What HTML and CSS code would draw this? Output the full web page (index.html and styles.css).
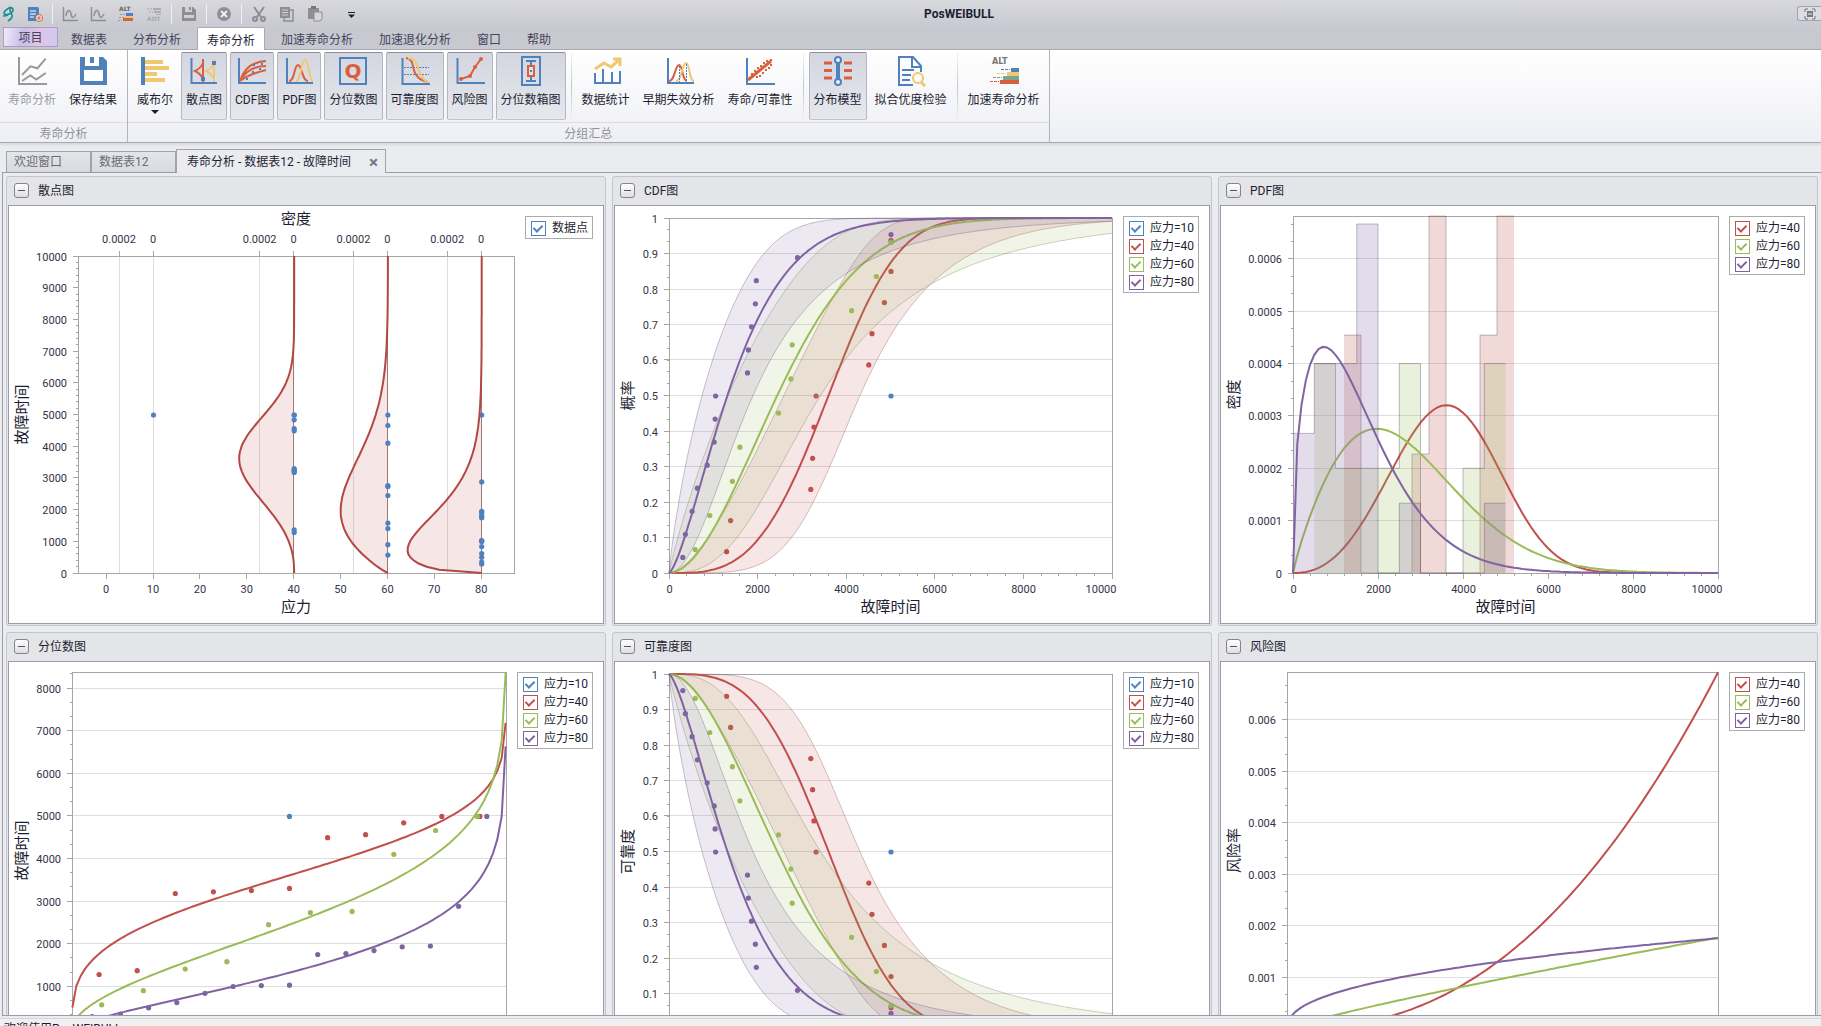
FILE: index.html
```html
<!DOCTYPE html>
<html lang="zh-CN">
<head>
  <meta charset="UTF-8">
  <meta name="viewport" content="width=device-width, initial-scale=1.0">
  <title>PosWEIBULL</title>
  <link rel="stylesheet" href="styles.css">
</head>
<body>
  <div class="app">
    <header class="titlebar">
      <div class="quick">
        <svg class="logo" width="17" height="18" viewBox="0 0 17 18"><path d="M11 2C7 4 4 6 4 8s3 2 5 1 5-3 4-5-3-1-3 1 1 3 2 5-1 4-4 6M3 11c2 0 3 0 5-1" fill="none" stroke="#14908f" stroke-width="1.600"/></svg>
        <button aria-label="数据"><svg viewBox="0 0 16 16"><path d="M1 1h10l1 2v12H1z" fill="#4f81bd"/><path d="M3 5h6M3 8h6M3 11h4" stroke="#fff"/><circle cx="12" cy="12" r="3.500" fill="#e8e8ec" stroke="#d9603f"/><path d="M10 12h4M12 10v4" stroke="#d9603f"/></svg></button>
        <span class="sep"></span>
        <button disabled aria-label="曲线"><svg viewBox="0 0 16 16"><path d="M1.500 1v13.500H16M4 10c1-7 4-7 5-2s3 4 5 0" class="g thin"/></svg></button>
        <button disabled aria-label="曲线"><svg viewBox="0 0 16 16"><path d="M1.500 1v13.500H16M4 10c1-7 4-7 5-2s3 4 5 0" class="g thin"/></svg></button>
        <button aria-label="加速寿命"><svg viewBox="0 0 16 16"><text x="1" y="5" class="mini">ALT</text><path d="M8 7h7v3H8z" fill="#4f81bd"/><path d="M7 10h8v2H7z" fill="#efc86f"/><path d="M5 12h10v3H5z" fill="#d9603f"/><path d="M2 8.500h5M1 11.500h5M0 14.500h4" stroke="#999" stroke-dasharray="2 1"/></svg></button>
        <button disabled aria-label="加速退化"><svg viewBox="0 0 16 16"><path d="M7 2h8v2H7zM8 5h7v2H8zM10 8h5v1h-5z" fill="#aaa"/><path d="M1 3h5M3 6h4" stroke="#aaa" stroke-dasharray="2 1"/><text x="1" y="15" class="mini dim">ADT</text></svg></button>
        <span class="sep"></span>
        <button disabled aria-label="保存"><svg viewBox="0 0 16 16"><path d="M1 1h11l3 3v11H1z" fill="#8f8f92"/><path d="M4 1h7v5H4zM3 9h10v3H3z" fill="#d0d0d5"/><path d="M8 1h2v3H8z" fill="#8f8f92"/></svg></button>
        <span class="sep"></span>
        <button disabled aria-label="关闭"><svg viewBox="0 0 16 16"><circle cx="8" cy="8" r="7" fill="#8f8f92"/><path d="M5 5l6 6M11 5l-6 6" stroke="#eee" stroke-width="2"/></svg></button>
        <span class="sep"></span>
        <button disabled aria-label="剪切"><svg viewBox="0 0 16 16"><path d="M3 1l7 10M13 1L6 11" class="g"/><circle cx="4" cy="13" r="2" class="g"/><circle cx="12" cy="13" r="2" class="g"/></svg></button>
        <button disabled aria-label="复制"><svg viewBox="0 0 16 16"><path d="M5 4h9v11H5z" class="g thin"/><path d="M1 1h10v11H1z" fill="#8f8f92"/><path d="M3 4h6M3 6.500h6M3 9h6" stroke="#d0d0d5"/></svg></button>
        <button disabled aria-label="粘贴"><svg viewBox="0 0 16 16"><path d="M1 2h11v11H1z" fill="#8f8f92"/><path d="M4 0h5v3H4z" fill="#777"/><path d="M7 6h8v7l-2 2H7z" fill="#d5d5da" stroke="#8f8f92"/></svg></button>
        <button class="more" aria-label="自定义"><svg viewBox="0 0 16 16"><path d="M5 6.500h7" stroke="#222"/><path d="M5 8.500h7L8.500 12z" fill="#222"/></svg></button>
      </div>
      <h1>PosWEIBULL</h1>
      <button class="win" aria-label="窗口"><svg width="12" height="12" viewBox="0 0 12 12"><path d="M1 4V1h3M8 1h3v3M11 8v3H8M4 11H1V8" fill="none" stroke="#777787"/><path d="M3 3h6v6H3z" fill="#777787"/><path d="M4 6h4" stroke="#eee"/></svg></button>
    </header>

    <nav class="tabs">
      <button class="file">项目</button>
      <button>数据表</button>
      <button>分布分析</button>
      <button class="on">寿命分析</button>
      <button>加速寿命分析</button>
      <button>加速退化分析</button>
      <button>窗口</button>
      <button>帮助</button>
    </nav>

    <section class="ribbon">
      <div class="group">
        <div class="items">
          <button class="tool" disabled><svg viewBox="0 0 32 32"><path d="M3 2v27h28" class="ax gray"/><path d="M6 20l8.400-8.700 7 2L29.700 3.700M6 26l8.300-5.500 6 4 9.400-6.500" fill="none" stroke="#999" stroke-width="2"/></svg>寿命分析</button>
          <button class="tool"><svg viewBox="0 0 32 32"><path d="M3 2h23l4 4v24H3z" fill="#4f81bd"/><path d="M8 2h14v9H8zM7 15h19v11H7z" fill="#fff"/><path d="M13 2h4v6h-4z" fill="#4f81bd"/></svg>保存结果</button>
        </div>
        <div class="caption">寿命分析</div>
      </div>
      <div class="group wide">
        <div class="items">
          <button class="tool"><svg viewBox="0 0 32 32"><path d="M2 2h4v28H2z" fill="#4f81bd"/><path d="M6 5h18v4H6zM6 11h24v4H6zM6 17h12v4H6zM6 23h20v4H6z" fill="#efc86f"/></svg>威布尔<i class="arrow"></i></button>
          <button class="tool down"><svg viewBox="0 0 32 32"><path d="M3.500 3v25H29" class="ax"/><path d="M15 4v23M15 8Q13 13 7 16q6 3 8 8" class="r"/><path d="M26 4v23M26 8Q24 13 18 16q6 3 8 8" class="y"/><path d="M13 22h4v4h-4zM24 6h4v4h-4z" fill="#4f81bd"/></svg>散点图</button>
          <button class="tool down"><svg viewBox="0 0 32 32"><path d="M3 3v25h27" class="ax"/><path d="M4 26Q10 7 30 6M4 26Q12 11 30 11M4 26Q13 19 30 15" class="r"/><path d="M17 9h2v2h-2zM16 16h2v2h-2zM23 13h2v2h-2zM10 23h2v2h-2zM25 8h2v2h-2z" fill="#4f81bd"/></svg>CDF图</button>
          <button class="tool down"><svg viewBox="0 0 32 32"><path d="M4 3v25h26" class="ax"/><path d="M6 26c6 0 5-16 9-16s4 16 10 16" class="r"/><path d="M13 26c5 0 5-21 9-21s4 21 8 21" class="y"/></svg>PDF图</button>
          <button class="tool down"><svg viewBox="0 0 32 32"><path d="M3 3h26v26H3z" fill="none" stroke="#4f81bd" stroke-width="2"/><text x="16" y="23" class="q">Q</text></svg>分位数图</button>
          <button class="tool down"><svg viewBox="0 0 32 32"><path d="M3.500 3v26H31" class="ax"/><path d="M5 12.500h25M5 19.500h25" stroke="#4f81bd" stroke-dasharray="2 1"/><path d="M7 3c8 1 6 9 9 15s7 8 13 9" class="r"/><path d="M9 3c9 0 9 9 12 15s5 9 9 9" class="y"/></svg>可靠度图</button>
          <button class="tool down"><svg viewBox="0 0 32 32"><path d="M3.500 3v25H31" class="ax"/><path d="M7 24l9-3 5-9 6-8" class="r"/><circle cx="7" cy="24" r="2" class="dot"/><circle cx="16" cy="21" r="2" class="dot"/><circle cx="21" cy="12" r="2" class="dot"/><circle cx="27" cy="4" r="2" class="dot"/></svg>风险图</button>
          <button class="tool down"><svg viewBox="0 0 32 32"><path d="M7 2h18v28H7z" fill="none" stroke="#4f81bd" stroke-width="2"/><path d="M16 6v20M11 6h10M11 26h10" class="ax"/><path d="M13 11h6v10h-6z" fill="#dfe2ea" stroke="#d9603f" stroke-width="2"/><path d="M15 15h2v2h-2z" fill="#4f81bd"/></svg>分位数箱图</button>
          <span class="bar"></span>
          <button class="tool"><svg viewBox="0 0 32 32"><path d="M5 18v10h25V16M13 14v14M22 17v11" class="ax"/><path d="M5 14l9-6 7 4 8-7M23 4h7v7" class="y thick"/></svg>数据统计</button>
          <button class="tool"><svg viewBox="0 0 32 32"><path d="M5 3v25h26" class="ax"/><path d="M6 26c6 0 6-16 10-16s3 16 8 16" class="r"/><path d="M13 26c6 0 6-18 10-18s3 18 8 18" class="y"/><path d="M16.500 11v16M23.500 9v18" stroke="#4f81bd" stroke-dasharray="2 1"/></svg>早期失效分析</button>
          <button class="tool"><svg viewBox="0 0 32 32"><path d="M3 3v26h28" class="ax"/><path d="M4 25L27 6" class="r thick"/><path d="M7 18h2v2H7zM10 15h2v2h-2zM13 12h2v2h-2zM16 10h2v2h-2zM19 7h2v2h-2zM22 5h2v2h-2zM26 4h2v2h-2zM12 21h2v2h-2zM15 20h2v2h-2zM18 17h2v2h-2zM21 14h2v2h-2zM24 12h2v2h-2zM26 9h2v2h-2zM15 14h2v2h-2zM20 10h2v2h-2z" fill="#d9603f"/></svg>寿命/可靠性</button>
          <span class="bar"></span>
          <button class="tool down"><svg viewBox="0 0 32 32"><path d="M2 8h8M2 15.500h8M2 23h8M22 8h8M22 15.500h8M22 23h8" stroke="#d9603f" stroke-width="3"/><path d="M16 6v20" stroke="#4f81bd" stroke-width="4"/><circle cx="16" cy="5" r="3" fill="#eef0f5" stroke="#4f81bd" stroke-width="2"/><circle cx="16" cy="27" r="3" fill="#eef0f5" stroke="#4f81bd" stroke-width="2"/></svg>分布模型</button>
          <button class="tool"><svg viewBox="0 0 32 32"><path d="M18 30H4V2h14l8 9v6M17 3v9h8" class="ax"/><path d="M7 15h12M7 20h9M7 25h8" stroke="#4f81bd" stroke-width="2"/><circle cx="23" cy="23" r="5" class="y"/><path d="M26 27l4 4" class="y thick"/></svg>拟合优度检验</button>
          <span class="bar"></span>
          <button class="tool"><svg viewBox="0 0 32 32"><text x="4" y="9" class="alt">ALT</text><path d="M23 13h8v4h-8z" fill="#4f81bd"/><path d="M19 17h12v4H19z" fill="#efc86f"/><path d="M15 21h16v4H15z" fill="#74a892"/><path d="M12 25h19v4H12z" fill="#d9603f"/><g stroke-dasharray="3 1"><path d="M13 14.500h9" stroke="#4f81bd"/><path d="M9 18.500h9" stroke="#efc86f"/><path d="M5 22.500h9" stroke="#74a892"/><path d="M2 26.500h9" stroke="#d9603f"/></g></svg>加速寿命分析</button>
        </div>
        <div class="caption">分组汇总</div>
      </div>
    </section>

    <nav class="docs">
      <button>欢迎窗口</button>
      <button>数据表12</button>
      <button class="on">寿命分析 - 数据表12 - 故障时间<b>×</b></button>
    </nav>

    <main class="work">
      <article class="panel">
        <h2><button class="fold" aria-label="折叠"></button>散点图</h2>
        <div class="chart">
          <svg class="plot" data-chart="scatter"></svg>
          <div class="legend">
            <label class="blue"><input type="checkbox" checked>数据点</label>
          </div>
        </div>
      </article>
      <article class="panel">
        <h2><button class="fold" aria-label="折叠"></button>CDF图</h2>
        <div class="chart">
          <svg class="plot" data-chart="cdf"></svg>
          <div class="legend">
            <label class="blue"><input type="checkbox" checked>应力=10</label>
            <label class="red"><input type="checkbox" checked>应力=40</label>
            <label class="green"><input type="checkbox" checked>应力=60</label>
            <label class="purple"><input type="checkbox" checked>应力=80</label>
          </div>
        </div>
      </article>
      <article class="panel">
        <h2><button class="fold" aria-label="折叠"></button>PDF图</h2>
        <div class="chart">
          <svg class="plot" data-chart="pdf"></svg>
          <div class="legend">
            <label class="red"><input type="checkbox" checked>应力=40</label>
            <label class="green"><input type="checkbox" checked>应力=60</label>
            <label class="purple"><input type="checkbox" checked>应力=80</label>
          </div>
        </div>
      </article>
      <article class="panel">
        <h2><button class="fold" aria-label="折叠"></button>分位数图</h2>
        <div class="chart">
          <svg class="plot" data-chart="quantile"></svg>
          <div class="legend">
            <label class="blue"><input type="checkbox" checked>应力=10</label>
            <label class="red"><input type="checkbox" checked>应力=40</label>
            <label class="green"><input type="checkbox" checked>应力=60</label>
            <label class="purple"><input type="checkbox" checked>应力=80</label>
          </div>
        </div>
      </article>
      <article class="panel">
        <h2><button class="fold" aria-label="折叠"></button>可靠度图</h2>
        <div class="chart">
          <svg class="plot" data-chart="reliability"></svg>
          <div class="legend">
            <label class="blue"><input type="checkbox" checked>应力=10</label>
            <label class="red"><input type="checkbox" checked>应力=40</label>
            <label class="green"><input type="checkbox" checked>应力=60</label>
            <label class="purple"><input type="checkbox" checked>应力=80</label>
          </div>
        </div>
      </article>
      <article class="panel">
        <h2><button class="fold" aria-label="折叠"></button>风险图</h2>
        <div class="chart">
          <svg class="plot" data-chart="hazard"></svg>
          <div class="legend">
            <label class="red"><input type="checkbox" checked>应力=40</label>
            <label class="green"><input type="checkbox" checked>应力=60</label>
            <label class="purple"><input type="checkbox" checked>应力=80</label>
          </div>
        </div>
      </article>
    </main>

    <footer class="status">欢迎使用PosWEIBULL</footer>
  </div>

  <script src="charts.js"></script>
</body>
</html>
```

FILE: styles.css
```css
* {
  box-sizing: border-box;
}

html,
body {
  margin: 0;
  height: 100%;
  overflow: hidden;
}

body {
  font-family: Roboto, "Noto Sans CJK SC", sans-serif;
  font-size: 12px;
  line-height: 16px;
  color: #1e1e32;
  background: #ebecf0;
}

button {
  font: inherit;
  color: inherit;
  background: none;
  border: 0;
  padding: 0;
}

/* the status bar runs a little past the bottom of the window */
.app {
  display: flex;
  flex-direction: column;
  height: calc(100vh + 16px);
}

/* title bar */
.titlebar {
  display: flex;
  align-items: center;
  height: 27px;
  flex: none;
  background: linear-gradient(#d8d9dd, #c9c9d2);
}

.quick {
  display: flex;
  align-items: center;
}

.quick .logo {
  margin-right: 4px;
}

.quick button {
  width: 28px;
  height: 18px;
}

.quick button svg {
  display: block;
  width: 16px;
  height: 16px;
  margin: 0 auto;
}

.quick .more {
  margin-left: 8px;
}

.quick .sep {
  width: 1px;
  height: 20px;
  margin: 0 3px;
  background: #f1f1f4;
}

.g {
  fill: none;
  stroke: #8f8f92;
  stroke-width: 2;
}

.g.thin {
  stroke-width: 1.5;
}

.mini {
  font: bold 6px "DejaVu Sans", sans-serif;
  fill: #666;
}

.mini.dim {
  fill: #aaa;
}

.titlebar h1 {
  flex: 1;
  margin: 0;
  padding-right: 244px;
  font-size: 12px;
  font-weight: 700;
  text-align: center;
}

.win {
  width: 24px;
  height: 15px;
  border: 1px solid #a3a3b0;
  border-right: 0;
  border-radius: 3px 0 0 3px;
  background: #dcdce2;
}

.win svg {
  display: block;
  margin: 0 auto;
}

/* ribbon tabs */
.tabs {
  display: flex;
  gap: 6px;
  height: 23px;
  flex: none;
  padding-left: 3px;
  background: #c8c8d1;
  border-bottom: 1px solid #a9a9b1;
  color: #44445a;
}

.tabs button {
  padding: 4px 10px 0;
  height: 22px;
}

.tabs .file {
  width: 55px;
  height: 20px;
  margin-right: -3px;
  padding: 2px 0 0;
  border: 1px solid #a7a2bb;
  background: linear-gradient(100deg, #f3e9fa, #c9bfe8 35%, #e3c3e8 65%, #cfc9f2);
}

.tabs .on {
  height: 23px;
  margin-bottom: -1px;
  background: #fff;
  border: 1px solid #a9a9b1;
  border-bottom: 0;
  border-radius: 2px 2px 0 0;
  padding: 3px 9px 0;
  color: #1e1e32;
}

/* ribbon */
.ribbon {
  display: flex;
  height: 93px;
  flex: none;
  background: linear-gradient(#fff, #eeeff4);
  border-bottom: 1px solid #a9a9b1;
  box-shadow: 0 2px 2px #d9dadf;
}

.group {
  display: flex;
  flex-direction: column;
  border-right: 1px solid #b4b4bd;
}

.items {
  display: flex;
  gap: 3px;
  height: 74px;
  padding: 2px 5px 2px 3px;
}

.wide .items {
  padding: 2px 4px;
}

.caption {
  flex: 1;
  text-align: center;
  color: #92929e;
  border-top: 1px solid #dcdce2;
  padding-top: 3px;
}

.tool {
  display: flex;
  flex-direction: column;
  align-items: center;
  padding: 2px 4px 0;
  border: 1px solid transparent;
  white-space: nowrap;
  border-radius: 2px;
}

.tool svg {
  width: 32px;
  height: 32px;
  margin-bottom: 5px;
}

.tool:disabled {
  color: #9a9aa6;
}

.tool.down {
  background: linear-gradient(#d3d6df, #e6e8ee);
  border-color: #8d8d9b #b6b6c1 #c3c3cc;
}

.arrow {
  border: 4px solid transparent;
  border-top-color: #1e1e32;
  border-bottom: 0;
  margin-top: 2px;
}

.bar {
  width: 1px;
  margin: 0 2px;
  background: linear-gradient(#f4f4f7, #c6c6cf, #f0f0f4);
}

.ax {
  fill: none;
  stroke: #4f81bd;
  stroke-width: 2;
}

.ax.gray {
  stroke: #999;
}

.r {
  fill: none;
  stroke: #d9603f;
  stroke-width: 2;
}

.y {
  fill: none;
  stroke: #efc86f;
  stroke-width: 2;
}

.thick {
  stroke-width: 3;
}

.dot {
  fill: #d9603f;
}

.q {
  font: bold 20px "DejaVu Sans", sans-serif;
  fill: #d9603f;
  text-anchor: middle;
}

.alt {
  font: bold 8px "DejaVu Sans", sans-serif;
  fill: #777;
}

/* document tabs */
.docs {
  display: flex;
  align-items: flex-end;
  height: 29px;
  flex: none;
  padding-left: 6px;
  color: #6b6b7a;
}

.docs button {
  height: 21px;
  min-width: 85px;
  padding: 0 7px;
  text-align: left;
  border: 1px solid #a3a3b0;
  border-bottom: 0;
  background: linear-gradient(#e4e5e9, #d9dadf);
}

.docs .on {
  height: 24px;
  margin-bottom: -1px;
  position: relative;
  padding: 0 7px 0 10px;
  background: #ebecf0;
  color: #1e1e32;
}

.docs b {
  margin-left: 18px;
  font-size: 17px;
  line-height: 12px;
  vertical-align: -2px;
  color: #777787;
}

/* chart panels */
.work {
  flex: 1;
  min-height: 0;
  overflow: hidden;
  display: grid;
  grid-template-columns: repeat(3, minmax(0, 1fr));
  align-content: start;
  gap: 6px;
  margin-left: 2px;
  padding: 3px;
  border: 1px solid #9c9ca9;
  border-right: 0;
}

.panel {
  border: 1px solid #c3c4cc;
  border-radius: 3px;
  padding: 0 1px 1px;
  background: #e4e5e9;
}

.panel h2 {
  display: flex;
  align-items: center;
  gap: 9px;
  height: 28px;
  margin: 0;
  padding: 0 0 1px 6px;
  font-size: 12px;
  font-weight: 400;
}

.fold {
  width: 15px;
  height: 15px;
  border: 1px solid #83838a;
  border-radius: 3px;
  background: linear-gradient(#fff, #dedee2);
}

.fold::before {
  content: "";
  display: block;
  width: 7px;
  height: 1px;
  margin: 0 auto;
  background: #55555f;
}

.chart {
  display: flex;
  align-items: flex-start;
  background: #fff;
  border: 1px solid #9c9ca9;
  padding-right: 10px;
}

.plot {
  flex: 1;
  min-width: 0;
  height: 417px;
  overflow: visible;
}

.legend {
  display: flex;
  flex-direction: column;
  margin-top: 10px;
  padding: 2px 4px 1px 5px;
  border: 1px solid #ababab;
}

.legend label {
  display: flex;
  align-items: center;
  gap: 6px;
  height: 18px;
}

.legend input {
  appearance: none;
  display: grid;
  place-items: center;
  width: 15px;
  height: 15px;
  margin: 0;
  border: 1px solid currentColor;
  color: var(--c);
}

.legend input:checked::after {
  content: "";
  width: 4px;
  height: 7px;
  margin-bottom: 2px;
  border: solid currentColor;
  border-width: 0 2px 2px 0;
  transform: rotate(45deg);
}

.blue { --c: #4f81bd; }
.red { --c: #c0504d; }
.green { --c: #9bbb59; }
.purple { --c: #8064a2; }

.frame {
  fill: none;
  stroke: #a6a6a6;
}

.grid {
  stroke: #dedede;
}

.tick {
  fill: #333348;
  font-size: 11px;
}

.axis-title {
  fill: #1e1e32;
  font-size: 15px;
  text-anchor: middle;
}

.curve {
  fill: none;
  stroke-width: 2;
}

.status {
  flex: none;
  height: 24px;
  margin-top: 2px;
  padding: 2px 4px 0;
  border-top: 1px solid #d5d6da;
  background: #f0f0f0;
}
```

FILE: charts.js
```js
const BLUE = "#4f81bd";
const HEIGHT_BOTTOM = 367;

// Weibull fit for each stress level, c is the spread of the confidence band
const groups = [
  { color: "#c0504d", edge: "#8a5050", stress: 40, k: 3.33, eta: 4020, c: 0.74, bin: 400,
    times: [1290, 1380, 3190, 3230, 3260, 3310, 4500, 4570, 4850, 5000, 5000] },
  { color: "#9bbb59", edge: "#6f7f50", stress: 60, k: 1.86, eta: 2976, c: 0.64, bin: 500,
    times: [580, 910, 1420, 1590, 2460, 2740, 2770, 4110, 4670, 5000] },
  { color: "#8064a2", edge: "#60507a", stress: 80, k: 1.423, eta: 1706, c: 0.61, bin: 500,
    times: [300, 360, 510, 630, 850, 1010, 1030, 1040, 1760, 1780, 1850, 1940, 1960, 2890, 5000] }
];

const cdf = (g, t) => 1 - Math.exp(-Math.pow(t / g.eta, g.k));
const pdf = (g, t) => g.k / g.eta * Math.pow(t / g.eta, g.k - 1) * Math.exp(-Math.pow(t / g.eta, g.k));
const hazard = (g, t) => g.k / g.eta * Math.pow(t / g.eta, g.k - 1);
const quantile = (g, p) => g.eta * Math.pow(-Math.log(1 - p), 1 / g.k);
const rank = (i, n) => (i + 0.7) / (n + 0.4);

function bound(g, t, sign) {
  if (t <= 0) return 0;
  const u = g.k * Math.log(t / g.eta);
  const sd = Math.sqrt((1.1087 - 0.514 * u + g.c * u * u) / g.times.length);
  return 1 - Math.exp(-Math.exp(u + sign * 1.96 * sd));
}

function range(from, to, step) {
  const out = [];
  const n = Math.floor((to - from) / step + 0.001);
  for (let i = 0; i <= n; i++) out.push(from + i * step);
  return out;
}

const path = pts => "M" + pts.map(p => p[0].toFixed(1) + " " + p[1].toFixed(1)).join("L");
const snap = v => Math.floor(v) + 0.5;

// Draws frame, grid, ticks and titles; returns the scales
function axes(svg, o) {
  const right = svg.clientWidth - 11;
  const x = v => o.left + (v - o.x0) / (o.x1 - o.x0) * (right - o.left);
  const y = v => HEIGHT_BOTTOM - v / o.ymax * (HEIGHT_BOTTOM - o.top);
  let back = "";
  let front = "";

  for (const v of range(0, o.ymax, o.yStep)) {
    const py = snap(y(v));
    if (o.grid !== false && v > 0) back += `<path class="grid" d="M${o.left} ${py}H${right}"/>`;
    front += `<path class="frame" d="M${o.left - 5} ${py}h5"/>`;
    front += `<text class="tick" text-anchor="end" x="${o.left - 11}" y="${py + 4}">${+v.toFixed(5)}</text>`;
  }
  for (const v of range(0, o.ymax, o.yMinor)) {
    front += `<path class="frame" d="M${o.left - 2} ${snap(y(v))}h2"/>`;
  }
  if (o.xStep) {
    for (const v of range(0, o.x1, o.xStep)) {
      const px = snap(x(v));
      const last = v === o.x1;
      front += `<path class="frame" d="M${px} ${HEIGHT_BOTTOM}v6"/>`;
      front += `<text class="tick" text-anchor="${last ? "end" : "middle"}" x="${last ? px + 4 : px}" y="${HEIGHT_BOTTOM + 20}">${v}</text>`;
    }
    for (const v of range(0, o.x1, o.xMinor)) {
      front += `<path class="frame" d="M${snap(x(v))} ${HEIGHT_BOTTOM}v3"/>`;
    }
  }
  const cx = (o.left + right) / 2;
  const cy = (o.top + HEIGHT_BOTTOM) / 2;
  front += `<rect class="frame" x="${snap(o.left)}" y="${snap(o.top)}" width="${Math.round(right - o.left)}" height="${HEIGHT_BOTTOM - Math.floor(o.top)}"/>`;
  front += `<text class="axis-title" transform="translate(18 ${cy}) rotate(-90)">${o.yTitle}</text>`;
  if (o.xTitle) front += `<text class="axis-title" x="${cx}" y="${HEIGHT_BOTTOM + 39}">${o.xTitle}</text>`;
  return { x, y, back, front, cx, right };
}

const dot = (x, y, color) => `<circle cx="${(x + 0.5).toFixed(1)}" cy="${(y + 0.5).toFixed(1)}" r="2.600" fill="${color}"/>`;

const charts = {
  scatter(svg) {
    const a = axes(svg, { left: 69, top: 50, x0: -6, x1: 87, ymax: 10000, yStep: 1000, yMinor: 200, grid: false, yTitle: "故障时间", xTitle: "应力" });
    let s = "";
    for (const v of range(0, 80, 10)) {
      s += `<path class="frame" d="M${snap(a.x(v))} ${HEIGHT_BOTTOM}v6"/><text class="tick" text-anchor="middle" x="${a.x(v)}" y="387">${v}</text>`;
    }
    for (const v of [10, 40, 60, 80]) {
      const px = a.x(v);
      for (const [dx, label] of [[34, "0.0002"], [0, "0"]]) {
        s += `<path class="grid" d="M${snap(px - dx)} 50V${HEIGHT_BOTTOM}"/><path class="frame" d="M${snap(px - dx)} 45v5"/>`;
        s += `<text class="tick" text-anchor="middle" x="${px - dx}" y="37">${label}</text>`;
      }
    }
    s += `<text class="axis-title" x="${a.cx}" y="18">密度</text>` + a.front;
    for (const g of groups) {
      const px = a.x(g.stress);
      const pts = range(0, 10000, 100).map(t => [px + 0.5 - pdf(g, t) / 0.0002 * 34.3, a.y(t)]);
      s += `<path d="${path(pts)}Z" fill="#c0504d" fill-opacity="0.14"/><path d="M${snap(px)} 50V${HEIGHT_BOTTOM}" stroke="#a07878"/>`;
      for (const t of g.times) s += dot(px, a.y(t), BLUE);
      s += `<path class="curve" stroke="#b24743" d="${path(pts)}"/>`;
    }
    return s + dot(a.x(10), a.y(5000), BLUE);
  },

  cdf(svg, flip) {
    const f = flip ? v => 1 - v : v => v;
    const a = axes(svg, { left: 54, top: 12, x0: 0, x1: 10000, ymax: 1, yStep: 0.1, yMinor: 1 / 30, xStep: 2000, xMinor: 400, yTitle: flip ? "可靠度" : "概率", xTitle: "故障时间" });
    let s = a.back + a.front + dot(a.x(5000), a.y(0.5), BLUE);
    const ts = range(0, 10000, 50);
    for (const g of groups) {
      const up = ts.map(t => [a.x(t), a.y(f(bound(g, t, 1)))]);
      const low = ts.map(t => [a.x(t), a.y(f(bound(g, t, -1)))]);
      s += `<path d="${path(up.concat(low.slice().reverse()))}Z" fill="${g.color}" fill-opacity="0.14"/>`;
      s += `<path d="${path(up)}${path(low)}" fill="none" stroke="${g.edge}" stroke-opacity="0.35"/>`;
      s += `<path class="curve" stroke="${g.color}" d="${path(ts.map(t => [a.x(t), a.y(f(cdf(g, t)))]))}"/>`;
      g.times.forEach((t, i) => { s += dot(a.x(t), a.y(f(rank(i, g.times.length))), g.color); });
    }
    return s;
  },

  reliability(svg) {
    return charts.cdf(svg, true);
  },

  pdf(svg) {
    const a = axes(svg, { left: 72, top: 10, x0: 0, x1: 10000, ymax: 0.000682, yStep: 0.0001, yMinor: 0.0001 / 3, xStep: 2000, xMinor: 400, yTitle: "密度", xTitle: "故障时间" });
    let s = a.back + a.front;
    for (const g of groups) {
      const first = g.stress === 80 ? 0 : Math.floor(g.times[0] / g.bin);
      const step = [];
      for (let b = first; b * g.bin < 5000; b++) {
        // the last bin keeps the readings on its right edge
        const n = g.times.filter(t => t >= b * g.bin && (t < (b + 1) * g.bin || (t === 5000 && (b + 1) * g.bin === 5000))).length;
        const h = a.y(Math.min(n / g.times.length / g.bin, 0.000682));
        step.push([a.x(b * g.bin), h], [a.x((b + 1) * g.bin), h]);
      }
      s += `<path d="${path([[step[0][0], HEIGHT_BOTTOM]].concat(step, [[step[step.length - 1][0], HEIGHT_BOTTOM]]))}Z" fill="${g.color}" fill-opacity="0.22"/>`;
      s += `<path d="${path(step)}" fill="none" stroke="#50404f" stroke-opacity="0.35"/>`;
      s += `<path class="curve" stroke="${g.color}" d="${path(range(0, 10000, 100).map(t => [a.x(t), a.y(pdf(g, t))]))}"/>`;
    }
    return s;
  },

  quantile(svg) {
    const a = axes(svg, { left: 63, top: 10, x0: 0, x1: 1, ymax: 8376, yStep: 1000, yMinor: 1000 / 3, yTitle: "故障时间" });
    const ps = [0.001].concat(range(0.01, 0.99, 0.01), 0.999);
    let s = a.back + a.front + dot(a.x(0.5), a.y(5000), BLUE);
    for (const g of groups) {
      s += `<path class="curve" stroke="${g.color}" d="${path(ps.map(p => [a.x(p), Math.max(11, a.y(quantile(g, p)))]))}"/>`;
      g.times.forEach((t, i) => { s += dot(a.x(rank(i, g.times.length)), a.y(t), g.color); });
    }
    return s;
  },

  hazard(svg) {
    const a = axes(svg, { left: 66, top: 10, x0: 0, x1: 10000, ymax: 0.00693, yStep: 0.001, yMinor: 0.001 / 3, yTitle: "风险率" });
    let s = a.back + a.front;
    for (const g of groups) {
      s += `<path class="curve" stroke="${g.color}" d="${path(range(0, 10000, 100).map(t => [a.x(t), a.y(hazard(g, t))]))}"/>`;
    }
    return s;
  }
};

function draw() {
  document.querySelectorAll(".plot").forEach(svg => {
    svg.innerHTML = charts[svg.dataset.chart](svg);
  });
}

window.addEventListener("resize", draw);
draw();
```
